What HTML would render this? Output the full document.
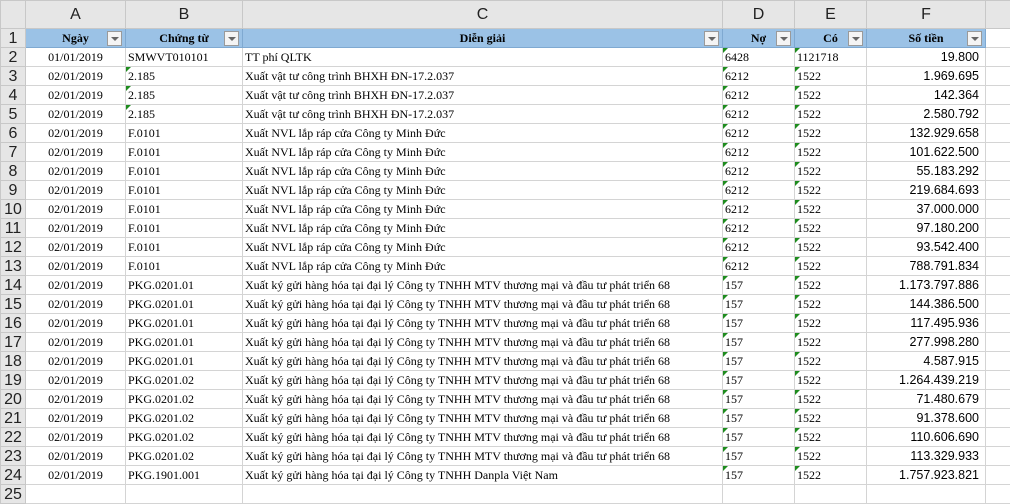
<!DOCTYPE html>
<html><head><meta charset="utf-8"><style>
*{margin:0;padding:0;box-sizing:border-box}
body{width:1010px;height:488px;overflow:hidden;background:#fff;font-family:"Liberation Serif",serif;font-size:12px;color:#000;position:relative}
table{border-collapse:collapse;table-layout:fixed;position:absolute;left:0;top:0;width:1025px}
td{border:1px solid #d4d4d4;height:19px;white-space:nowrap;overflow:hidden;padding:0 2px;position:relative;line-height:17px}
tr.h td{height:28px;background:#e6e6e6;font-family:"Liberation Sans",sans-serif;font-size:16px;text-align:center;border-color:#c8c8c8;color:#222;line-height:26px}
td.r{background:#e6e6e6;font-family:"Liberation Sans",sans-serif;font-size:16px;text-align:center;color:#222;border-color:#c8c8c8;padding:0}
tr.t td.c{background:#9bc2e6;font-weight:bold;text-align:center;border-color:#7fa9d1}
.f{position:absolute;right:3px;top:2px;width:15px;height:15px;background:#f4f4f4;border:1px solid #9a9a9a}
.f:after{content:"";position:absolute;left:3px;top:5px;border-left:4px solid transparent;border-right:4px solid transparent;border-top:4px solid #666}
.n{text-align:right;font-family:"Liberation Sans",sans-serif;font-size:12.5px;padding-right:6px}
.d{text-align:center}
.g:before{content:"";position:absolute;left:0;top:0;border-top:5px solid #1e8c1e;border-right:5px solid transparent}
.corner{background:#e6e6e6}
</style></head><body>
<table>
<colgroup><col style="width:25px"><col style="width:100px"><col style="width:117px"><col style="width:480px"><col style="width:72px"><col style="width:72px"><col style="width:119px"><col style="width:40px"></colgroup>
<tr class="h"><td class="corner"></td><td>A</td><td>B</td><td>C</td><td>D</td><td>E</td><td>F</td><td></td></tr>
<tr class="t"><td class="r">1</td><td class="c">Ngày<span class="f"></span></td><td class="c">Chứng từ<span class="f"></span></td><td class="c">Diễn giải<span class="f"></span></td><td class="c">Nợ<span class="f"></span></td><td class="c">Có<span class="f"></span></td><td class="c">Số tiền<span class="f"></span></td><td></td></tr>
<tr><td class="r">2</td><td class="d">01/01/2019</td><td>SMWVT010101</td><td>TT phí QLTK</td><td class="g">6428</td><td class="g">1121718</td><td class="n">19.800</td><td></td></tr>
<tr><td class="r">3</td><td class="d">02/01/2019</td><td class="g">2.185</td><td>Xuất vật tư công trình BHXH ĐN-17.2.037</td><td class="g">6212</td><td class="g">1522</td><td class="n">1.969.695</td><td></td></tr>
<tr><td class="r">4</td><td class="d">02/01/2019</td><td class="g">2.185</td><td>Xuất vật tư công trình BHXH ĐN-17.2.037</td><td class="g">6212</td><td class="g">1522</td><td class="n">142.364</td><td></td></tr>
<tr><td class="r">5</td><td class="d">02/01/2019</td><td class="g">2.185</td><td>Xuất vật tư công trình BHXH ĐN-17.2.037</td><td class="g">6212</td><td class="g">1522</td><td class="n">2.580.792</td><td></td></tr>
<tr><td class="r">6</td><td class="d">02/01/2019</td><td>F.0101</td><td>Xuất NVL lắp ráp cửa Công ty Minh Đức</td><td class="g">6212</td><td class="g">1522</td><td class="n">132.929.658</td><td></td></tr>
<tr><td class="r">7</td><td class="d">02/01/2019</td><td>F.0101</td><td>Xuất NVL lắp ráp cửa Công ty Minh Đức</td><td class="g">6212</td><td class="g">1522</td><td class="n">101.622.500</td><td></td></tr>
<tr><td class="r">8</td><td class="d">02/01/2019</td><td>F.0101</td><td>Xuất NVL lắp ráp cửa Công ty Minh Đức</td><td class="g">6212</td><td class="g">1522</td><td class="n">55.183.292</td><td></td></tr>
<tr><td class="r">9</td><td class="d">02/01/2019</td><td>F.0101</td><td>Xuất NVL lắp ráp cửa Công ty Minh Đức</td><td class="g">6212</td><td class="g">1522</td><td class="n">219.684.693</td><td></td></tr>
<tr><td class="r">10</td><td class="d">02/01/2019</td><td>F.0101</td><td>Xuất NVL lắp ráp cửa Công ty Minh Đức</td><td class="g">6212</td><td class="g">1522</td><td class="n">37.000.000</td><td></td></tr>
<tr><td class="r">11</td><td class="d">02/01/2019</td><td>F.0101</td><td>Xuất NVL lắp ráp cửa Công ty Minh Đức</td><td class="g">6212</td><td class="g">1522</td><td class="n">97.180.200</td><td></td></tr>
<tr><td class="r">12</td><td class="d">02/01/2019</td><td>F.0101</td><td>Xuất NVL lắp ráp cửa Công ty Minh Đức</td><td class="g">6212</td><td class="g">1522</td><td class="n">93.542.400</td><td></td></tr>
<tr><td class="r">13</td><td class="d">02/01/2019</td><td>F.0101</td><td>Xuất NVL lắp ráp cửa Công ty Minh Đức</td><td class="g">6212</td><td class="g">1522</td><td class="n">788.791.834</td><td></td></tr>
<tr><td class="r">14</td><td class="d">02/01/2019</td><td>PKG.0201.01</td><td>Xuất ký gửi hàng hóa tại đại lý Công ty TNHH MTV thương mại và đầu tư phát triển 68</td><td class="g">157</td><td class="g">1522</td><td class="n">1.173.797.886</td><td></td></tr>
<tr><td class="r">15</td><td class="d">02/01/2019</td><td>PKG.0201.01</td><td>Xuất ký gửi hàng hóa tại đại lý Công ty TNHH MTV thương mại và đầu tư phát triển 68</td><td class="g">157</td><td class="g">1522</td><td class="n">144.386.500</td><td></td></tr>
<tr><td class="r">16</td><td class="d">02/01/2019</td><td>PKG.0201.01</td><td>Xuất ký gửi hàng hóa tại đại lý Công ty TNHH MTV thương mại và đầu tư phát triển 68</td><td class="g">157</td><td class="g">1522</td><td class="n">117.495.936</td><td></td></tr>
<tr><td class="r">17</td><td class="d">02/01/2019</td><td>PKG.0201.01</td><td>Xuất ký gửi hàng hóa tại đại lý Công ty TNHH MTV thương mại và đầu tư phát triển 68</td><td class="g">157</td><td class="g">1522</td><td class="n">277.998.280</td><td></td></tr>
<tr><td class="r">18</td><td class="d">02/01/2019</td><td>PKG.0201.01</td><td>Xuất ký gửi hàng hóa tại đại lý Công ty TNHH MTV thương mại và đầu tư phát triển 68</td><td class="g">157</td><td class="g">1522</td><td class="n">4.587.915</td><td></td></tr>
<tr><td class="r">19</td><td class="d">02/01/2019</td><td>PKG.0201.02</td><td>Xuất ký gửi hàng hóa tại đại lý Công ty TNHH MTV thương mại và đầu tư phát triển 68</td><td class="g">157</td><td class="g">1522</td><td class="n">1.264.439.219</td><td></td></tr>
<tr><td class="r">20</td><td class="d">02/01/2019</td><td>PKG.0201.02</td><td>Xuất ký gửi hàng hóa tại đại lý Công ty TNHH MTV thương mại và đầu tư phát triển 68</td><td class="g">157</td><td class="g">1522</td><td class="n">71.480.679</td><td></td></tr>
<tr><td class="r">21</td><td class="d">02/01/2019</td><td>PKG.0201.02</td><td>Xuất ký gửi hàng hóa tại đại lý Công ty TNHH MTV thương mại và đầu tư phát triển 68</td><td class="g">157</td><td class="g">1522</td><td class="n">91.378.600</td><td></td></tr>
<tr><td class="r">22</td><td class="d">02/01/2019</td><td>PKG.0201.02</td><td>Xuất ký gửi hàng hóa tại đại lý Công ty TNHH MTV thương mại và đầu tư phát triển 68</td><td class="g">157</td><td class="g">1522</td><td class="n">110.606.690</td><td></td></tr>
<tr><td class="r">23</td><td class="d">02/01/2019</td><td>PKG.0201.02</td><td>Xuất ký gửi hàng hóa tại đại lý Công ty TNHH MTV thương mại và đầu tư phát triển 68</td><td class="g">157</td><td class="g">1522</td><td class="n">113.329.933</td><td></td></tr>
<tr><td class="r">24</td><td class="d">02/01/2019</td><td>PKG.1901.001</td><td>Xuất ký gửi hàng hóa tại đại lý Công ty TNHH Danpla Việt Nam</td><td class="g">157</td><td class="g">1522</td><td class="n">1.757.923.821</td><td></td></tr>
<tr><td class="r">25</td><td></td><td></td><td></td><td></td><td></td><td></td><td></td></tr>
</table>
</body></html>
